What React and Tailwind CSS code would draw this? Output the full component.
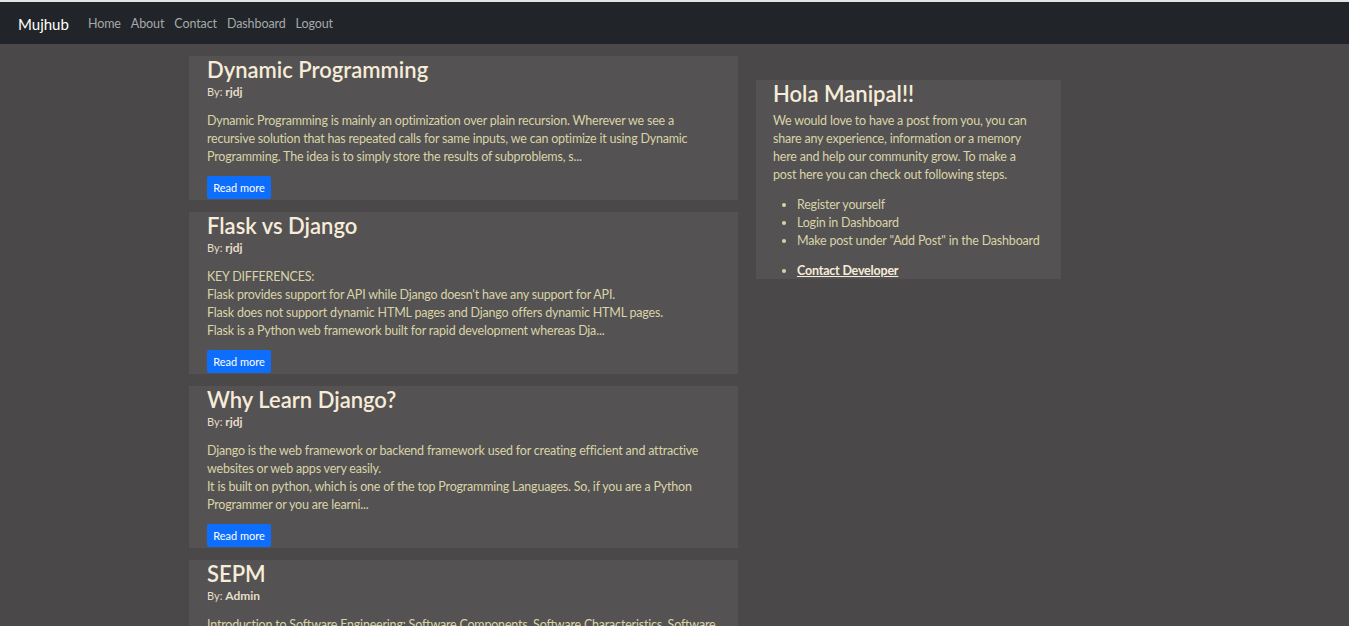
const posts = [
  {
    title: "Dynamic Programming",
    author: "rjdj",
    lines: [
      "Dynamic Programming is mainly an optimization over plain recursion. Wherever we see a",
      "recursive solution that has repeated calls for same inputs, we can optimize it using Dynamic",
      "Programming. The idea is to simply store the results of subproblems, s...",
    ],
  },
  {
    title: "Flask vs Django",
    author: "rjdj",
    lines: [
      "KEY DIFFERENCES:",
      "Flask provides support for API while Django doesn't have any support for API.",
      "Flask does not support dynamic HTML pages and Django offers dynamic HTML pages.",
      "Flask is a Python web framework built for rapid development whereas Dja...",
    ],
  },
  {
    title: "Why Learn Django?",
    author: "rjdj",
    lines: [
      "Django is the web framework or backend framework used for creating efficient and attractive",
      "websites or web apps very easily.",
      "It is built on python, which is one of the top Programming Languages. So, if you are a Python",
      "Programmer or you are learni...",
    ],
  },
  {
    title: "SEPM",
    author: "Admin",
    lines: [
      "Introduction to Software Engineering: Software Components, Software Characteristics, Software",
      "Crisis, Software Engineering Processes...",
    ],
  },
];

const intro = [
  "We would love to have a post from you, you can",
  "share any experience, information or a memory",
  "here and help our community grow. To make a",
  "post here you can check out following steps.",
];

function PostCard({ post }) {
  return (
    <div className="bg-[#545252] pl-[18px] pr-4 pb-[1px]">
      <h2 className="text-[22px] leading-[28px] font-semibold text-[#f6ecd9]">{post.title}</h2>
      <div className="text-[11px] leading-[14px] text-[#e6ddcc] mt-[1px]">
        By: <span className="font-bold text-[12px]">{post.author}</span>
      </div>
      <p className="text-[12.5px] tracking-[-0.2px] leading-[18px] text-[#d9d4a8] mt-[13px] mb-[10px] whitespace-nowrap">
        {post.lines.map((l, i) => (
          <span key={i} className="block">{l}</span>
        ))}
      </p>
      <button className="block bg-[#0d6efd] text-white text-[11px] leading-[22px] h-[23px] w-[64px] rounded-[2px]">
        Read more
      </button>
    </div>
  );
}

export default function App() {
  return (
    <div className="min-h-[626px] bg-[#4a4848] font-['Lato',sans-serif] border-t-2 border-[#e4e4e4]">
      <nav className="h-[42px] bg-[#212529] flex items-center pl-[18px] pt-[2px]">
        <span className="text-white text-[15px] mr-[19px]">Mujhub</span>
        <div className="flex gap-[10px] text-[12.5px] tracking-[-0.1px] text-[#a6a8ab]">
          <a>Home</a>
          <a>About</a>
          <a>Contact</a>
          <a>Dashboard</a>
          <a>Logout</a>
        </div>
      </nav>
      <div className="flex pl-[189px] pt-[12px] gap-[18px] h-[582px] overflow-hidden">
        <div className="w-[549px] shrink-0 flex flex-col gap-[12px]">
          {posts.map((p) => (
            <PostCard key={p.title} post={p} />
          ))}
        </div>
        <div className="mt-[24px] self-start w-[305px] shrink-0 bg-[#545252] pl-[17px] pr-3 h-[199px]">
          <h2 className="text-[22px] leading-[28px] font-semibold text-[#f6ecd9]">Hola Manipal!!</h2>
          <p className="text-[12.5px] tracking-[-0.2px] leading-[18px] text-[#d9d4a8] mt-[4px] whitespace-nowrap">
            {intro.map((l, i) => (
              <span key={i} className="block">{l}</span>
            ))}
          </p>
          <ul className="list-disc pl-[24px] text-[12.5px] tracking-[-0.2px] leading-[18px] text-[#d9d4a8] mt-[12px] whitespace-nowrap">
            <li>Register yourself</li>
            <li>Login in Dashboard</li>
            <li>Make post under "Add Post" in the Dashboard</li>
          </ul>
          <ul className="list-disc pl-[24px] text-[12.5px] tracking-[-0.2px] leading-[18px] text-[#d9d4a8] mt-[12px]">
            <li>
              <a className="font-bold underline text-[#f6ecd9]">Contact Developer</a>
            </li>
          </ul>
        </div>
      </div>
    </div>
  );
}
